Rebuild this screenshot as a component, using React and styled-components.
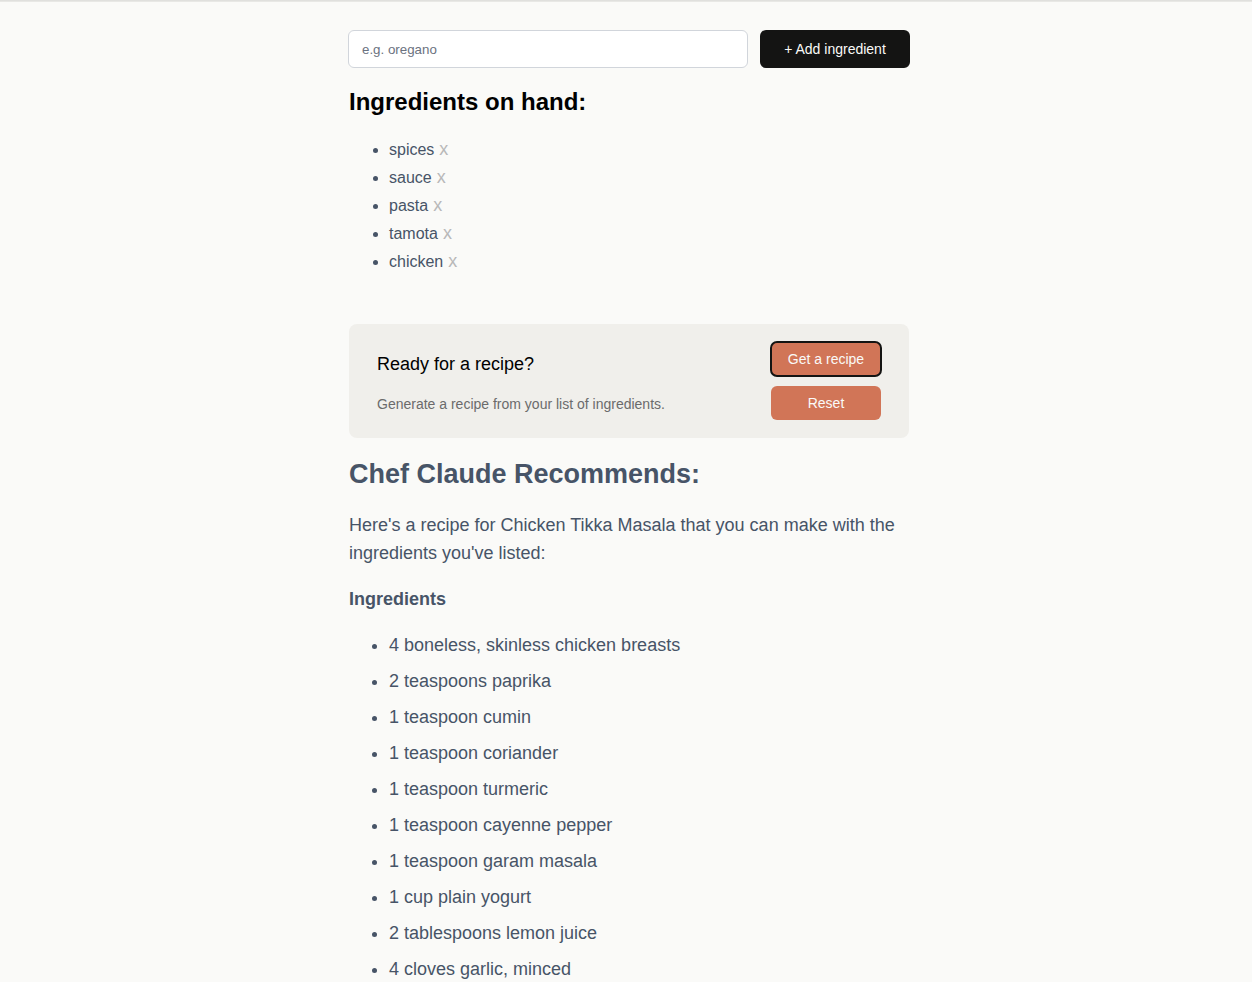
import React from "react";
import styled, { createGlobalStyle } from "styled-components";

const Global = createGlobalStyle`
  html, body { margin: 0; padding: 0; background: #fafaf8; }
  body { font-family: "Liberation Sans", Arial, sans-serif; }
  * { box-sizing: border-box; }
`;

const TopShade = styled.div`
  height: 2px;
  background: linear-gradient(#dcdcda, #ecece9);
`;

const Main = styled.main`
  width: 568px;
  margin: 0 auto;
  padding: 28px 0 40px 6px;
`;

const Form = styled.form`
  display: flex;
  gap: 12px;
  height: 38px;
`;

const Input = styled.input`
  flex: 1;
  border: 1px solid #d1d5db;
  border-radius: 6px;
  background: #fff;
  padding: 1px 13px 0;
  font-family: "Liberation Sans", Arial, sans-serif;
  font-size: 13.333px;
  color: #333;
  &::placeholder { color: #6b7280; }
`;

const AddButton = styled.button`
  width: 150px;
  border: none;
  border-radius: 6px;
  background: #141413;
  color: #fafaf8;
  font-family: "Liberation Sans", Arial, sans-serif;
  font-size: 14px;
  cursor: pointer;
`;

const Heading = styled.h1`
  margin: 20px 0 0 1px;
  font-size: 24px;
  line-height: 28px;
  font-weight: 700;
  color: #000;
`;

const HandList = styled.ul`
  margin: 20px 0 0 1px;
  padding-left: 40px;
  color: #475467;
  font-size: 16px;
  line-height: 28px;
  li { height: 28px; }
`;

const Remove = styled.span`
  color: #b8b8b8;
  margin-left: 5px;
  font-size: 18px;
  line-height: 1;
  cursor: pointer;
`;

const Card = styled.section`
  margin: 48px 1px 0;
  background: #f0efeb;
  border-radius: 8px;
  height: 114px;
  padding: 17px 28px 18px;
  display: flex;
  justify-content: space-between;
`;

const CardText = styled.div`
  display: flex;
  flex-direction: column;
  padding-top: 12px;
`;

const CardTitle = styled.h3`
  margin: 0;
  font-size: 18px;
  line-height: 22px;
  font-weight: 400;
  color: #000;
`;

const CardSub = styled.p`
  margin: 20px 0 0;
  font-size: 14px;
  line-height: 18px;
  color: #6b6b6b;
`;

const ButtonStack = styled.div`
  display: flex;
  flex-direction: column;
  gap: 10px;
  padding-top: 1px;
`;

const CardButton = styled.button`
  width: 110px;
  height: 34px;
  border: none;
  border-radius: 6px;
  background: #d17557;
  color: #fafaf8;
  font-family: "Liberation Sans", Arial, sans-serif;
  font-size: 14px;
  cursor: pointer;
  outline: ${(p) => (p.$focused ? "2px solid #141413" : "none")};
  outline-offset: -1px;
`;

const Recipe = styled.section`
  margin: 0 1px;
  color: #475467;
`;

const RecipeTitle = styled.h2`
  margin: 20px 0 0;
  font-size: 27px;
  line-height: 32px;
  font-weight: 700;
`;

const Para = styled.p`
  margin: 21px 0 0;
  font-size: 18px;
  line-height: 28px;
`;

const SubHead = styled.h3`
  margin: 18px 0 0;
  font-size: 18px;
  line-height: 28px;
  font-weight: 700;
`;

const RecipeList = styled.ul`
  margin: 18px 0 0;
  padding-left: 40px;
  font-size: 18px;
  line-height: 28px;
  li + li { margin-top: 8px; }
`;

const onHand = ["spices", "sauce", "pasta", "tamota", "chicken"];

const recipeIngredients = [
  "4 boneless, skinless chicken breasts",
  "2 teaspoons paprika",
  "1 teaspoon cumin",
  "1 teaspoon coriander",
  "1 teaspoon turmeric",
  "1 teaspoon cayenne pepper",
  "1 teaspoon garam masala",
  "1 cup plain yogurt",
  "2 tablespoons lemon juice",
  "4 cloves garlic, minced",
  "1 tablespoon grated ginger",
  "1 can tomato sauce",
];

export default function App() {
  return (
    <>
      <Global />
      <TopShade />
      <Main>
        <Form onSubmit={(e) => e.preventDefault()}>
          <Input placeholder="e.g. oregano" aria-label="Add ingredient" />
          <AddButton type="button">+ Add ingredient</AddButton>
        </Form>
        <Heading>Ingredients on hand:</Heading>
        <HandList>
          {onHand.map((i) => (
            <li key={i}>
              {i}
              <Remove>x</Remove>
            </li>
          ))}
        </HandList>
        <Card>
          <CardText>
            <CardTitle>Ready for a recipe?</CardTitle>
            <CardSub>Generate a recipe from your list of ingredients.</CardSub>
          </CardText>
          <ButtonStack>
            <CardButton $focused>Get a recipe</CardButton>
            <CardButton>Reset</CardButton>
          </ButtonStack>
        </Card>
        <Recipe>
          <RecipeTitle>Chef Claude Recommends:</RecipeTitle>
          <Para>
            Here's a recipe for Chicken Tikka Masala that you can make with the
            ingredients you've listed:
          </Para>
          <SubHead>Ingredients</SubHead>
          <RecipeList>
            {recipeIngredients.map((i) => (
              <li key={i}>{i}</li>
            ))}
          </RecipeList>
        </Recipe>
      </Main>
    </>
  );
}
